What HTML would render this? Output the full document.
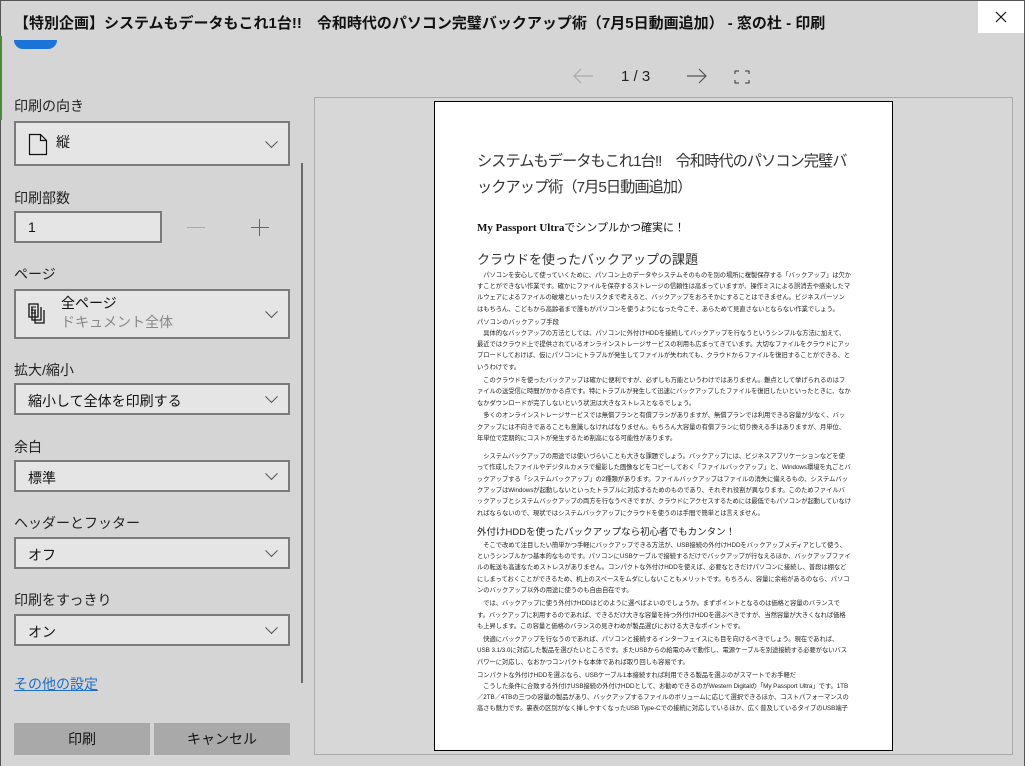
<!DOCTYPE html>
<html><head><meta charset="utf-8"><style>
*{margin:0;padding:0;box-sizing:border-box}
body{width:1025px;height:766px;overflow:hidden;background:#d5d5d5;font-family:"Liberation Sans","Noto Sans CJK JP",sans-serif;position:relative;color:#111}
.win{position:absolute;left:0;top:0;width:1025px;height:766px;border:1px solid #555;border-bottom:none}
.title{position:absolute;left:14px;top:12px;font-size:15px;font-weight:bold;white-space:nowrap}
.close{position:absolute;left:978px;top:1px;width:46px;height:32px;background:#fff}
.lbl{position:absolute;left:14px;font-size:14px;color:#222}
.dd{position:absolute;left:14px;width:276px;height:32px;background:#e5e5e5;border:2px solid #7b7b7b;font-size:14px;padding:6px 12px}
.chev{position:absolute;right:12px;top:50%;width:9px;height:9px;border-right:1px solid #555;border-bottom:1px solid #555;transform:translateY(-75%) rotate(45deg)}
.btn{position:absolute;top:723px;height:32px;width:136px;background:#a9a9a9;font-size:14px;text-align:center;line-height:32px}
.prev{position:absolute;left:314px;top:97px;width:699px;height:658px;border:1px solid #aaa;background:#d7d7d7}
.page{position:absolute;left:434px;top:101px;width:459px;height:650px;background:#fff;border:1px solid #000;overflow:hidden}
.page .c{position:absolute;left:42px;top:47px;width:374px;color:#333}
.h1{font-size:15.2px;line-height:26px;color:#333;letter-spacing:-0.95px}
.h2{font-size:11px;margin-top:18px;color:#111}
.h3{font-size:13px;margin-top:14px;color:#333}
.p{font-size:6.3px;line-height:11.4px;margin-top:1.5px;text-indent:1em;color:#222;letter-spacing:-0.05px}
.s{font-size:6.3px;margin-top:2px;color:#222}
.h4{font-size:9.5px;margin-top:5px;color:#222}
</style></head><body>
<div class="win"></div>
<div style="position:absolute;left:0;top:36px;width:2px;height:84px;background:#4a8a3a"></div>
<div style="position:absolute;left:14px;top:40px;width:43px;height:9px;background:#1a73d9;border-radius:0 0 10px 10px"></div>
<div class="title">【特別企画】システムもデータもこれ1台!!　令和時代のパソコン完璧バックアップ術（7月5日動画追加） - 窓の杜 - 印刷</div>
<div class="close"><svg width="46" height="32"><path d="M18 11l10 10M28 11l-10 10" stroke="#111" stroke-width="1.2"/></svg></div>

<div class="lbl" style="top:96px">印刷の向き</div>
<div class="dd" style="top:121px;height:45px;padding:9px 0 0 40px">縦<svg style="position:absolute;left:12px;top:10px" width="20" height="24"><path d="M1.5 1.5h11l6 6v14h-17z M12.5 1.5v6h6" fill="none" stroke="#111" stroke-width="1.2"/></svg><i class="chev"></i></div>

<div class="lbl" style="top:188px">印刷部数</div>
<div class="dd" style="top:211px;width:148px;height:32px">1</div>
<div style="position:absolute;left:187px;top:227px;width:18px;height:1px;background:#aaa"></div>
<div style="position:absolute;left:251px;top:227px;width:18px;height:1px;background:#666"></div>
<div style="position:absolute;left:259px;top:219px;width:1px;height:17px;background:#666"></div>

<div class="lbl" style="top:264px">ページ</div>
<div class="dd" style="top:289px;height:50px;padding:3px 0 0 45px;line-height:19px">全ページ<br><span style="color:#888">ドキュメント全体</span>
<svg style="position:absolute;left:11px;top:12px" width="22" height="22"><path d="M2 1h9v13H2z M5 4v13h9V4 M8 7v13h9V7" fill="none" stroke="#111" stroke-width="1.3"/><path d="M4 4h5M4 7h5M4 10h5" stroke="#111"/></svg><i class="chev"></i></div>

<div class="lbl" style="top:360px">拡大/縮小</div>
<div class="dd" style="top:383px">縮小して全体を印刷する<i class="chev"></i></div>
<div class="lbl" style="top:437px">余白</div>
<div class="dd" style="top:460px">標準<i class="chev"></i></div>
<div class="lbl" style="top:513px">ヘッダーとフッター</div>
<div class="dd" style="top:537px">オフ<i class="chev"></i></div>
<div class="lbl" style="top:590px">印刷をすっきり</div>
<div class="dd" style="top:614px">オン<i class="chev"></i></div>
<div style="position:absolute;left:14px;top:674px;font-size:14px;color:#1a6fc9;text-decoration:underline">その他の設定</div>
<div style="position:absolute;left:301px;top:163px;width:2px;height:520px;background:#6a6a6a"></div>
<div class="btn" style="left:14px">印刷</div>
<div class="btn" style="left:154px">キャンセル</div>

<svg style="position:absolute;left:572px;top:68px" width="22" height="16"><path d="M21 8H2M9 1L2 8l7 7" fill="none" stroke="#aaa" stroke-width="1.2"/></svg>
<div style="position:absolute;left:621px;top:68px;font-size:15px;color:#222">1 / 3</div>
<svg style="position:absolute;left:686px;top:68px" width="22" height="16"><path d="M1 8h19M13 1l7 7-7 7" fill="none" stroke="#555" stroke-width="1.2"/></svg>
<svg style="position:absolute;left:734px;top:70px" width="16" height="14"><path d="M1 4V1h4M11 1h4v3M15 10v3h-4M5 13H1v-3" fill="none" stroke="#333"/></svg>

<div class="prev"></div>
<div class="page"><div class="c">
<div class="h1">システムもデータもこれ1台!!　令和時代のパソコン完璧バックアップ術（7月5日動画追加）</div>
<div class="h2"><b style="font-family:'Liberation Serif',serif">My Passport Ultra</b>でシンプルかつ確実に！</div>
<div class="h3">クラウドを使ったバックアップの課題</div>
<div class="p">パソコンを安心して使っていくために、パソコン上のデータやシステムそのものを別の場所に複製保存する「バックアップ」は欠かすことができない作業です。確かにファイルを保存するストレージの信頼性は高まっていますが、操作ミスによる誤消去や感染したマルウェアによるファイルの破壊といったリスクまで考えると、バックアップをおろそかにすることはできません。ビジネスパーソンはもちろん、こどもから高齢者まで誰もがパソコンを使うようになった今こそ、あらためて見直さないとならない作業でしょう。</div>
<div class="s">パソコンのバックアップ手段</div>
<div class="p">具体的なバックアップの方法としては、パソコンに外付けHDDを接続してバックアップを行なうというシンプルな方法に加えて、最近ではクラウド上で提供されているオンラインストレージサービスの利用も広まってきています。大切なファイルをクラウドにアップロードしておけば、仮にパソコンにトラブルが発生してファイルが失われても、クラウドからファイルを復旧することができる、というわけです。</div>
<div class="p">このクラウドを使ったバックアップは確かに便利ですが、必ずしも万能というわけではありません。難点として挙げられるのはファイルの送受信に時間がかかる点です。特にトラブルが発生して迅速にバックアップしたファイルを復旧したいといったときに、なかなかダウンロードが完了しないという状況は大きなストレスとなるでしょう。</div>
<div class="p">多くのオンラインストレージサービスでは無償プランと有償プランがありますが、無償プランでは利用できる容量が少なく、バックアップには不向きであることも意識しなければなりません。もちろん大容量の有償プランに切り換える手はありますが、月単位、年単位で定期的にコストが発生するため割高になる可能性があります。</div>
<div class="p" style="margin-top:6px">システムバックアップの用途では使いづらいことも大きな課題でしょう。バックアップには、ビジネスアプリケーションなどを使って作成したファイルやデジタルカメラで撮影した画像などをコピーしておく「ファイルバックアップ」と、Windows環境を丸ごとバックアップする「システムバックアップ」の2種類があります。ファイルバックアップはファイルの消失に備えるもの、システムバックアップはWindowsが起動しないといったトラブルに対応するためのものであり、それぞれ役割が異なります。このためファイルバックアップとシステムバックアップの両方を行なうべきですが、クラウドにアクセスするためには最低でもパソコンが起動していなければならないので、現状ではシステムバックアップにクラウドを使うのは手間で簡単とは言えません。</div>
<div class="h4">外付けHDDを使ったバックアップなら初心者でもカンタン！</div>
<div class="p">そこで改めて注目したい簡単かつ手軽にバックアップできる方法が、USB接続の外付けHDDをバックアップメディアとして使う、というシンプルかつ基本的なものです。パソコンにUSBケーブルで接続するだけでバックアップが行なえるほか、バックアップファイルの転送も高速なためストレスがありません。コンパクトな外付けHDDを使えば、必要なときだけパソコンに接続し、普段は棚などにしまっておくことができるため、机上のスペースをムダにしないこともメリットです。もちろん、容量に余裕があるのなら、パソコンのバックアップ以外の用途に使うのも自由自在です。</div>
<div class="p">では、バックアップに使う外付けHDDはどのように選べばよいのでしょうか。まずポイントとなるのは価格と容量のバランスです。バックアップに利用するのであれば、できるだけ大きな容量を持つ外付けHDDを選ぶべきですが、当然容量が大きくなれば価格も上昇します。この容量と価格のバランスの見きわめが製品選びにおける大きなポイントです。</div>
<div class="p">快適にバックアップを行なうのであれば、パソコンと接続するインターフェイスにも目を向けるべきでしょう。現在であれば、USB 3.1/3.0に対応した製品を選びたいところです。またUSBからの給電のみで動作し、電源ケーブルを別途接続する必要がないバスパワーに対応し、なおかつコンパクトな本体であれば取り回しも容易です。</div>
<div class="s">コンパクトな外付けHDDを選ぶなら、USBケーブル1本接続すれば利用できる製品を選ぶのがスマートでお手軽だ</div>
<div class="p">こうした条件に合致する外付けUSB接続の外付けHDDとして、お勧めできるのがWestern Digitalの「My Passport Ultra」です。1TB／2TB／4TBの三つの容量の製品があり、バックアップするファイルのボリュームに応じて選択できるほか、コストパフォーマンスの高さも魅力です。裏表の区別がなく挿しやすくなったUSB Type-Cでの接続に対応しているほか、広く普及しているタイプのUSB端子</div>
</div></div>
</body></html>
